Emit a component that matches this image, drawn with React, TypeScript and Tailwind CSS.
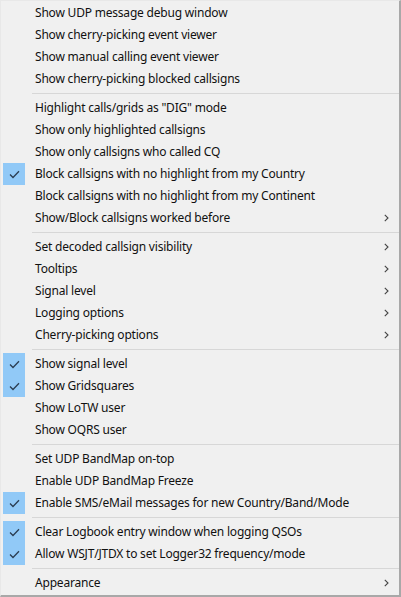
import React from 'react';

type Item = { label: string; checked?: boolean; sub?: boolean };

const groups: Item[][] = [
  [
    { label: 'Show UDP message debug window' },
    { label: 'Show cherry-picking event viewer' },
    { label: 'Show manual calling event viewer' },
    { label: 'Show cherry-picking blocked callsigns' },
  ],
  [
    { label: 'Highlight calls/grids as "DIG" mode' },
    { label: 'Show only highlighted callsigns' },
    { label: 'Show only callsigns who called CQ' },
    { label: 'Block callsigns with no highlight from my Country', checked: true },
    { label: 'Block callsigns with no highlight from my Continent' },
    { label: 'Show/Block callsigns worked before', sub: true },
  ],
  [
    { label: 'Set decoded callsign visibility', sub: true },
    { label: 'Tooltips', sub: true },
    { label: 'Signal level', sub: true },
    { label: 'Logging options', sub: true },
    { label: 'Cherry-picking options', sub: true },
  ],
  [
    { label: 'Show signal level', checked: true },
    { label: 'Show Gridsquares', checked: true },
    { label: 'Show LoTW user' },
    { label: 'Show OQRS user' },
  ],
  [
    { label: 'Set UDP BandMap on-top' },
    { label: 'Enable UDP BandMap Freeze' },
    { label: 'Enable SMS/eMail messages for new Country/Band/Mode', checked: true },
  ],
  [
    { label: 'Clear Logbook entry window when logging QSOs', checked: true },
    { label: 'Allow WSJT/JTDX to set Logger32 frequency/mode', checked: true },
  ],
  [{ label: 'Appearance', sub: true }],
];

function Check() {
  return (
    <svg width="11" height="9" viewBox="0 0 11 9" fill="none">
      <path d="M1 4.5 L4 7.5 L10 1.3" stroke="#2b3d52" strokeWidth="1.3" />
    </svg>
  );
}

function Chevron() {
  return (
    <svg width="5" height="8" viewBox="0 0 5 8" fill="none">
      <path d="M0.8 0.8 L4 4 L0.8 7.2" stroke="#444" strokeWidth="1.1" />
    </svg>
  );
}

function Row({ item }: { item: Item }) {
  return (
    <div className="flex h-[22px] items-center">
      <div
        className={`flex h-[22px] w-[22px] ml-[1px] items-center justify-center ${
          item.checked ? 'bg-[#91c9f7]' : ''
        }`}
      >
        {item.checked && <Check />}
      </div>
      <span className="ml-[10px] flex-1 text-[12px] tracking-[-0.2px] text-[#111] whitespace-nowrap">
        {item.label}
      </span>
      {item.sub && (
        <span className="mr-[10px] flex items-center">
          <Chevron />
        </span>
      )}
    </div>
  );
}

export default function App() {
  return (
    <div
      className="w-[401px] h-[597px] bg-[#f0f0f0] border-l border-t border-[#e8e8e8] border-r-2 border-b-2 border-r-[#a8a8a8] border-b-[#a8a8a8] pt-[1px] pl-[1px] overflow-hidden"
      style={{ fontFamily: '"Noto Sans", "Liberation Sans", sans-serif' }}
    >
      {groups.map((g, gi) => (
        <div key={gi}>
          {gi > 0 && (
            <div className="py-[3px] pl-[30px]">
              <div className="h-px bg-[#d7d7d7]" />
            </div>
          )}
          {g.map((it) => (
            <Row key={it.label} item={it} />
          ))}
        </div>
      ))}
    </div>
  );
}
